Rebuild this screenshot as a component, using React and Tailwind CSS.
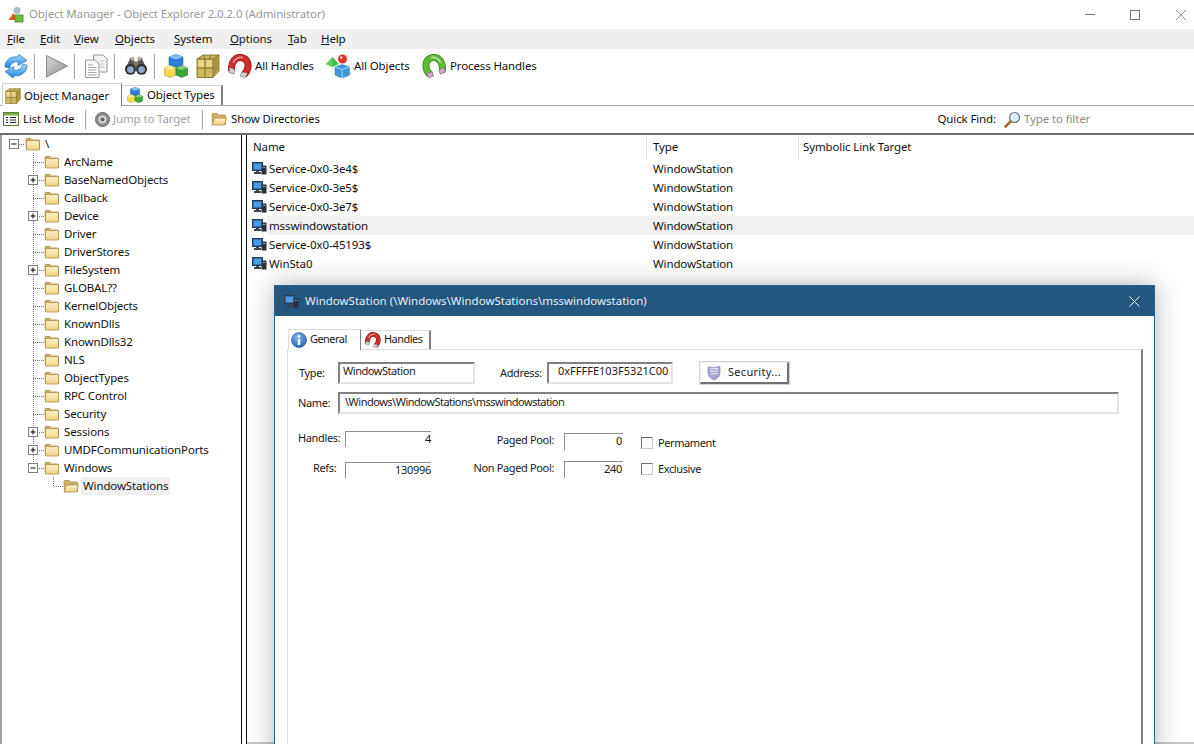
import React from "react";

const treeItems = [
  { name: "ArcName" },
  { name: "BaseNamedObjects", plus: true },
  { name: "Callback" },
  { name: "Device", plus: true },
  { name: "Driver" },
  { name: "DriverStores" },
  { name: "FileSystem", plus: true },
  { name: "GLOBAL??" },
  { name: "KernelObjects" },
  { name: "KnownDlls" },
  { name: "KnownDlls32" },
  { name: "NLS" },
  { name: "ObjectTypes" },
  { name: "RPC Control" },
  { name: "Security" },
  { name: "Sessions", plus: true },
  { name: "UMDFCommunicationPorts", plus: true },
];

const rows = ["Service-0x0-3e4$", "Service-0x0-3e5$", "Service-0x0-3e7$", "msswindowstation", "Service-0x0-45193$", "WinSta0"];

function FolderIcon({ open }) {
  return (
    <svg width="16" height="16" viewBox="0 0 16 16" className="shrink-0">
      <defs>
        <linearGradient id="fld" x1="0" y1="0" x2="0" y2="1">
          <stop offset="0" stopColor="#fcf1cc" />
          <stop offset="1" stopColor="#f0d083" />
        </linearGradient>
      </defs>
      <path d="M1 3.5 Q1 2.5 2 2.5 H6 L7.5 4 H13.5 Q14.5 4 14.5 5 V13.5 H1.5 Z" fill="#d2b261" stroke="#a38a4e" strokeWidth="0.8" />
      {open ? (
        <path d="M3.5 7 H15.5 L13.5 14 H1 Z" fill="url(#fld)" stroke="#a88a48" strokeWidth="0.8" />
      ) : (
        <path d="M1.5 5 Q1.5 4.6 2 4.6 H14 Q14.5 4.6 14.5 5 V13 Q14.5 14 13.5 14 H2.5 Q1.5 14 1.5 13 Z" fill="url(#fld)" stroke="#a88a48" strokeWidth="0.8" />
      )}
    </svg>
  );
}

function ExpandBox({ x, minus }) {
  return (
    <g>
      <rect x={x + 0.5} y="4.5" width="9" height="9" fill="#fff" stroke="#808080" />
      <path d={`M${x + 2.5} 9 H${x + 7.5}`} stroke="#000" strokeWidth="1" />
      {!minus && <path d={`M${x + 5} 6.5 V11.5`} stroke="#000" strokeWidth="1" />}
    </g>
  );
}

// dotted connectors and the +/- box of one tree row
function Gutter({ plus, minus, last }) {
  return (
    <svg width="44" height="18" className="shrink-0">
      <path d={last ? "M33.5 0 V9" : "M33.5 0 V18"} stroke="#777" strokeDasharray="1 1" />
      <path d="M33 9.5 H44" stroke="#777" strokeDasharray="1 1" />
      {(plus || minus) && <ExpandBox x={28} minus={minus} />}
    </svg>
  );
}

function StationIcon({ size = 15 }) {
  return (
    <svg width={size} height={size} viewBox="0 0 15 15" className="shrink-0">
      <rect x="0.5" y="1.5" width="10" height="8" fill="#2b6fb8" stroke="#2d3a4a" />
      <rect x="2" y="3" width="7" height="5" fill="#4f9be0" />
      <path d="M4 9.5 H7 V11 H9 V13 H2 V11 H4 Z" fill="#3c4650" />
      <rect x="9.5" y="4.5" width="5" height="9" fill="#2b3138" />
      <rect x="10.5" y="6" width="3" height="1" fill="#8a939c" />
    </svg>
  );
}

function Refresh() {
  return (
    <svg width="24" height="24" viewBox="0 0 24 24">
      <defs>
        <linearGradient id="rf" x1="0" y1="0" x2="0" y2="1">
          <stop offset="0" stopColor="#a8d9fb" />
          <stop offset="1" stopColor="#1a80e0" />
        </linearGradient>
      </defs>
      <path d="M1 13 C1 6 7 2 13.5 3 L15 0.5 L23 6.5 L14 11.5 L14.5 8 C10 7 6.5 9 5.8 14 Z" fill="url(#rf)" stroke="#1c6fbe" strokeWidth="0.7" />
      <path d="M23 11 C23 18.5 17 22.5 10.5 21.5 L9 24 L1 17.5 L10 12.5 L9.5 16 C14 17 17.6 15 18.2 10.5 Z" fill="url(#rf)" stroke="#1c6fbe" strokeWidth="0.7" />
    </svg>
  );
}

function Play() {
  return (
    <svg width="24" height="24" viewBox="0 0 24 24">
      <defs>
        <linearGradient id="pl" x1="0" y1="0" x2="1" y2="1">
          <stop offset="0" stopColor="#d8d8d8" />
          <stop offset="1" stopColor="#8c8c8c" />
        </linearGradient>
      </defs>
      <path d="M1.5 1.5 L22.5 12 L1.5 23 Z" fill="url(#pl)" stroke="#8a8a8a" />
    </svg>
  );
}

function Copy() {
  return (
    <svg width="24" height="24" viewBox="0 0 24 24">
      <path d="M9.5 1 H19 L23 5 V18 H9.5 Z" fill="#f4f4f4" stroke="#9a9a9a" />
      <path d="M1.5 6 H11 L15 10 V23.5 H1.5 Z" fill="#fafafa" stroke="#9a9a9a" />
      <path d="M4 11 H9 M4 13.5 H12.5 M4 16 H12.5 M4 18.5 H12.5 M4 21 H12.5" stroke="#a8a8a8" />
      <path d="M16 7 H20.5 M16 10 H20.5 M16 13 H20.5" stroke="#c0c0c0" />
    </svg>
  );
}

function Binoculars() {
  return (
    <svg width="24" height="24" viewBox="0 0 26 24">
      <path d="M7 3 H11 V9 H15 V3 H19 L24 14 H2 Z" fill="#555" />
      <rect x="7.5" y="2" width="3.5" height="4" fill="#b9b09c" />
      <rect x="15" y="2" width="3.5" height="4" fill="#b9b09c" />
      <rect x="10.5" y="7" width="5" height="6" fill="#857a68" />
      <circle cx="7" cy="15.5" r="6" fill="#333" />
      <circle cx="19" cy="15.5" r="6" fill="#333" />
      <circle cx="7" cy="16" r="3.6" fill="#8fa9c8" />
      <circle cx="19" cy="16" r="3.6" fill="#8fa9c8" />
    </svg>
  );
}

function Cubes({ size = 24 }) {
  return (
    <svg width={size} height={size} viewBox="0 0 24 24" className="shrink-0">
      <path d="M5 3 L12 0.5 L19 3 V11 L12 14 L5 11 Z" fill="#2c7fd8" stroke="#1f5fa8" strokeWidth="0.6" />
      <path d="M5 3 L12 5.5 L19 3 L12 0.5 Z" fill="#7fc0f5" />
      <path d="M0.5 14 L6 11.5 L12 14 V21 L6 23.5 L0.5 21 Z" fill="#f4d94a" stroke="#a89526" strokeWidth="0.6" />
      <path d="M0.5 14 L6 16 L12 14 L6 11.5 Z" fill="#fbef9a" />
      <path d="M12 14 L17.5 11.5 L23.5 14 V21 L17.5 23.5 L12 21 Z" fill="#3aa53a" stroke="#25752a" strokeWidth="0.6" />
      <path d="M12 14 L17.5 16 L23.5 14 L17.5 11.5 Z" fill="#7fd070" />
    </svg>
  );
}

function GoldBox({ size = 24 }) {
  return (
    <svg width={size} height={size} viewBox="0 0 24 24" className="shrink-0">
      <path d="M1 5 L7 1 H23 V17 L17 23.5 H1 Z" fill="#cdb95f" stroke="#6e5f22" strokeWidth="0.8" />
      <path d="M1 5 H17 L23 1 M17 5 V23.5" stroke="#6e5f22" strokeWidth="0.8" fill="none" />
      <path d="M1 14 H17 L23 9 M9 5 V23.5 M7 1 L9 5 M15 1 L13 5" stroke="#6e5f22" strokeWidth="0.8" fill="none" />
      <path d="M2 6 H8 V13 H2 Z M10 6 H16 V13 H10 Z" fill="#e6d487" />
      <path d="M18 5.5 L22 2.5 V16.5 L18 21 Z" fill="#a8923a" />
    </svg>
  );
}

function Magnet({ size = 24, green }) {
  const main = green ? "#5fbc30" : "#d02c2c";
  const edge = green ? "#3a821b" : "#871818";
  const tip = green ? "#d3a6cc" : "#cfd3d8";
  return (
    <svg width={size} height={size} viewBox="0 0 24 24" className="shrink-0">
      <g transform={green ? "translate(24 0) scale(-1 1) rotate(18 12 12)" : "rotate(18 12 12)"}>
        <path d="M5.5 19 C2 12 4.5 3.5 12 3.5 C19.5 3.5 22 12 18.5 19" fill="none" stroke={edge} strokeWidth="7" />
        <path d="M5.5 19 C2 12 4.5 3.5 12 3.5 C19.5 3.5 22 12 18.5 19" fill="none" stroke={main} strokeWidth="5.4" />
        <path d="M4.5 11 C5 7 8 3.5 12 3" fill="none" stroke="#fff" strokeOpacity="0.6" strokeWidth="1.5" />
        <path d="M2.5 16.5 L8.5 17 L8.5 21.5 L3.5 21.5 Z" fill={tip} stroke="#666" strokeWidth="0.6" />
        <path d="M15.5 17 L21.5 16.5 L20.5 21.5 L15.5 21.5 Z" fill={tip} stroke="#666" strokeWidth="0.6" />
      </g>
    </svg>
  );
}

function AllObjects() {
  return (
    <svg width="24" height="24" viewBox="0 0 24 24">
      <path d="M6.5 3 L13 10 L6.5 13 L0 10 Z" fill="#3fb84a" />
      <path d="M6.5 3 L6.5 13 L0 10 Z" fill="#62d066" />
      <circle cx="16.5" cy="5" r="4.5" fill="#e52e2e" />
      <circle cx="15.2" cy="3.5" r="1.4" fill="#ffb0a8" />
      <path d="M16 10.5 L23.5 13 V21 L16 24 L9 21 V13 Z" fill="#3a9ad9" stroke="#1f6ea8" strokeWidth="0.5" />
      <path d="M9 13 L16 15.5 L23.5 13 M16 15.5 V24" stroke="#bfe3f8" strokeWidth="0.8" fill="none" />
    </svg>
  );
}

function Sep() {
  return <div className="w-px h-[25px] bg-[#a5a5a5] shrink-0" />;
}

function Sep2() {
  return <div className="w-px h-[19px] bg-[#a5a5a5] shrink-0" />;
}

function Menu({ first, rest, className }) {
  return (
    <span className={className}>
      <span className="underline underline-offset-1">{first}</span>
      {rest}
    </span>
  );
}

function Sunken({ className, children }) {
  return (
    <div className={`border-t-2 border-l-2 border-t-[#808080] border-l-[#808080] border-r-2 border-b-2 border-r-[#e3e3e3] border-b-[#e3e3e3] leading-[14px] ${className}`}>
      {children}
    </div>
  );
}

function Check({ label }) {
  return (
    <div className="flex items-center gap-[5px] h-[12px]">
      <div className="w-[12px] h-[12px] border border-t-[#707070] border-l-[#707070] border-r-[#c8c8c8] border-b-[#c8c8c8] bg-white" />
      <span className="tracking-[-0.4px]">{label}</span>
    </div>
  );
}

function StatField({ className, children }) {
  return <div className={`border-t border-l border-[#909090] text-right leading-[13px] tracking-[-0.3px] ${className}`}>{children}</div>;
}

function Dialog() {
  return (
    <div className="absolute left-[274px] top-[285px] w-[881px] h-[480px] bg-white border border-[#2a6592] shadow-[0_0_24px_rgba(0,0,0,0.3)] text-[11px] tracking-[-0.35px] text-[#1a1a1a]">
      <div className="h-[30px] bg-[#22577f] flex items-center pl-[9px] pr-[14px] text-[11.5px] tracking-normal text-[#e6eff6]">
        <StationIcon />
        <span className="ml-[6px] flex-1 pb-[1px]">WindowStation (\Windows\WindowStations\msswindowstation)</span>
        <svg width="11" height="11" viewBox="0 0 11 11">
          <path d="M0.5 0.5 L10.5 10.5 M10.5 0.5 L0.5 10.5" stroke="#fff" strokeWidth="1" />
        </svg>
      </div>
      <div className="ml-[12px] mr-[11px] mt-[12px]">
        <div className="flex items-end h-[21px] pl-[1px] relative z-10">
          <div className="w-[73px] h-[21px] mb-[-1px] pb-[1px] bg-white border-t border-l border-[#dcdcdc] border-r border-r-[#808080] flex items-center pl-[2px] gap-[3px] tracking-[-0.55px]">
            <svg width="16" height="16" viewBox="0 0 16 16">
              <defs>
                <radialGradient id="inf" cx="0.4" cy="0.3" r="0.8">
                  <stop offset="0" stopColor="#7fb8ee" />
                  <stop offset="1" stopColor="#1c5fb4" />
                </radialGradient>
              </defs>
              <circle cx="8" cy="8" r="7.5" fill="url(#inf)" stroke="#1c4f90" strokeWidth="0.6" />
              <circle cx="8" cy="4.5" r="1.5" fill="#fff" />
              <rect x="6.8" y="7" width="2.4" height="6" fill="#fff" />
            </svg>
            <span>General</span>
          </div>
          <div className="w-[70px] h-[19px] pb-[1px] bg-white border-t border-[#dcdcdc] border-r-2 border-r-[#808080] flex items-center pl-[4px] gap-[3px] tracking-[-0.55px]">
            <Magnet size={16} />
            <span>Handles</span>
          </div>
        </div>
        <div className="h-[500px] border-t border-l border-[#dcdcdc] border-r-2 border-r-[#808080] relative">
          <div className="flex items-center h-[22px] mt-[12px]">
            <span className="ml-[11px] w-[39px]">Type:</span>
            <Sunken className="w-[137px] h-[22px] pl-[3px] tracking-[-0.45px]">WindowStation</Sunken>
            <span className="ml-[25px] w-[47px] pt-[1px]">Address:</span>
            <Sunken className="w-[126px] h-[22px] pl-[9px] tracking-normal">0xFFFFE103F5321C00</Sunken>
            <div className="ml-[27px] w-[89px] h-[22px] flex items-center border border-t-[#f0f0f0] border-l-[#f0f0f0] border-r-2 border-b-2 border-r-[#707070] border-b-[#707070] outline outline-[#d5d5d5] pl-[5px]">
              <svg width="16" height="16" viewBox="0 0 16 16">
                <path d="M2 2 Q8 3 14 1.5 V8 Q14 12.5 8 15 Q2 12.5 2 8 Z" fill="#a7a6d8" stroke="#77779f" strokeWidth="0.6" />
                <path d="M4 4 L12 3.5 M4 6.5 L12 6 M4.5 9 L11.5 8.5" stroke="#f0f0fa" />
              </svg>
              <span className="ml-[6px] tracking-[0.3px]">Security...</span>
            </div>
          </div>
          <div className="flex items-center h-[22px] mt-[8px]">
            <span className="ml-[10px] w-[40px]">Name:</span>
            <Sunken className="w-[781px] h-[22px] pl-[5px] pt-[1px] tracking-[-0.5px]">\Windows\WindowStations\msswindowstation</Sunken>
          </div>
          <div className="flex mt-[17px]">
            <div className="ml-[10px] w-[47px] flex flex-col items-start">
              <span className="h-[16px] leading-[14px]">Handles:</span>
              <span className="h-[16px] mt-[15px] ml-[15px] leading-[12px]">Refs:</span>
            </div>
            <div className="w-[86px]">
              <StatField className="h-[16px]">4</StatField>
              <StatField className="h-[16px] mt-[15px]">130996</StatField>
            </div>
            <div className="ml-[44px] w-[89px] flex flex-col items-end pr-[10px]">
              <span className="h-[17px] mt-[2px] leading-[14px]">Paged Pool:</span>
              <span className="h-[17px] mt-[10px] leading-[15px] whitespace-nowrap">Non Paged Pool:</span>
            </div>
            <div className="w-[59px] mt-[2px]">
              <StatField className="h-[17px] pr-[1px]">0</StatField>
              <StatField className="h-[17px] mt-[11px] pr-[1px]">240</StatField>
            </div>
            <div className="ml-[18px] mt-[6px] flex flex-col gap-[14px]">
              <Check label="Permament" />
              <Check label="Exclusive" />
            </div>
          </div>
        </div>
      </div>
    </div>
  );
}

export default function App() {
  return (
    <div className="relative w-[1194px] h-[744px] overflow-hidden bg-white text-[11.5px] tracking-[-0.13px] text-[#111] flex flex-col" style={{ fontFamily: '"Noto Sans", sans-serif' }}>
      {/* title bar */}
      <div className="h-[29px] flex items-center pl-[8px] shrink-0">
        <svg width="17" height="17" viewBox="0 0 17 17">
          <path d="M0.5 14 L5.5 7 L9 14 Z" fill="#e2561c" />
          <circle cx="9" cy="4.5" r="3.5" fill="#a9bccb" />
          <rect x="7" y="9" width="8" height="7" fill="#6cbf3c" stroke="#3f8a22" strokeWidth="0.8" />
        </svg>
        <span className="ml-[4px] pb-[1px] text-[#999]">Object Manager - Object Explorer 2.0.2.0 (Administrator)</span>
        <div className="ml-auto flex items-center">
          <div className="w-[10px] h-px bg-[#777] mr-[35px]" />
          <div className="w-[10px] h-[10px] border border-[#777] mr-[36px]" />
          <svg width="10" height="10" viewBox="0 0 10 10" className="mr-[8px]">
            <path d="M0 0 L10 10 M10 0 L0 10" stroke="#888" strokeWidth="0.9" />
          </svg>
        </div>
      </div>

      {/* menu */}
      <div className="h-[20px] bg-[#efefef] flex items-center shrink-0 leading-[20px]">
        <Menu first="F" rest="ile" className="ml-[7px] w-[33px]" />
        <Menu first="E" rest="dit" className="w-[34px]" />
        <Menu first="V" rest="iew" className="w-[41px]" />
        <Menu first="O" rest="bjects" className="w-[59px]" />
        <Menu first="S" rest="ystem" className="w-[56px]" />
        <Menu first="O" rest="ptions" className="w-[58px]" />
        <Menu first="T" rest="ab" className="w-[33px]" />
        <Menu first="H" rest="elp" />
      </div>

      {/* toolbar */}
      <div className="h-[34px] flex items-center shrink-0 pl-[4px]">
        <Refresh />
        <div className="w-[6px]" />
        <Sep />
        <div className="w-[10px]" />
        <Play />
        <div className="w-[5px]" />
        <Sep />
        <div className="w-[9px]" />
        <Copy />
        <div className="w-[6px]" />
        <Sep />
        <div className="w-[9px]" />
        <Binoculars />
        <div className="w-[6px]" />
        <Sep />
        <div className="w-[9px]" />
        <Cubes />
        <div className="w-[8px]" />
        <GoldBox />
        <div className="w-[8px]" />
        <Magnet />
        <span className="ml-[3px] w-[71px]">All Handles</span>
        <AllObjects />
        <span className="ml-[4px] w-[68px]">All Objects</span>
        <Magnet green />
        <span className="ml-[4px]">Process Handles</span>
      </div>

      {/* tabs */}
      <div className="h-[23px] flex items-end pl-[2px] border-b border-b-[#a8a8a8] shrink-0">
        <div className="w-[120px] h-[23px] mb-[-1px] pt-[2px] bg-white border border-[#d0d0d0] border-b-0 border-r-[#808080] flex items-center pl-[2px] gap-[3px] relative">
          <GoldBox size={16} />
          <span>Object Manager</span>
        </div>
        <div className="w-[101px] h-[20px] pb-[1px] border-t border-t-[#d0d0d0] border-r-2 border-r-[#808080] flex items-center pl-[5px] gap-[4px]">
          <Cubes size={16} />
          <span>Object Types</span>
        </div>
      </div>

      {/* second toolbar */}
      <div className="h-[29px] pb-[1px] flex items-center pl-[3px] shrink-0 border-b-2 border-b-[#6b6b6b]">
        <svg width="16" height="14" viewBox="0 0 16 14">
          <rect x="0.5" y="0.5" width="15" height="13" fill="#fff" stroke="#5c7f3a" />
          <rect x="1" y="1" width="14" height="2.5" fill="#7fae4d" />
          <path d="M3 5.5 H5 M7 5.5 H13 M3 8 H5 M7 8 H13 M3 10.5 H5 M7 10.5 H13" stroke="#222" />
        </svg>
        <span className="ml-[4px] w-[62px]">List Mode</span>
        <Sep2 />
        <svg width="15" height="15" viewBox="0 0 15 15" className="ml-[9px]">
          <circle cx="7.5" cy="7.5" r="7" fill="#8a8a8a" stroke="#666" />
          <circle cx="7.5" cy="7.5" r="4" fill="#d8d8d8" />
          <circle cx="7.5" cy="7.5" r="2" fill="#666" />
        </svg>
        <span className="ml-[3px] w-[89px] text-[#a0a0a0]">Jump to Target</span>
        <Sep2 />
        <div className="ml-[8px]"><FolderIcon open /></div>
        <span className="ml-[4px]">Show Directories</span>
        <span className="ml-auto">Quick Find:</span>
        <svg width="17" height="17" viewBox="0 0 17 17" className="ml-[8px]">
          <path d="M1.5 15.5 L7 10" stroke="#a06a2a" strokeWidth="2.6" strokeLinecap="round" />
          <circle cx="10.5" cy="6.5" r="5" fill="#d9ecf8" stroke="#777" strokeWidth="1.2" />
        </svg>
        <span className="ml-[3px] w-[170px] text-[#8a8a8a]">Type to filter</span>
      </div>

      {/* main panes */}
      <div className="flex-1 flex min-h-0">
        <div className="w-[242px] shrink-0 border-l-2 border-l-[#a0a0a0] border-r border-r-[#111]">
          <div className="flex items-center h-[18px]">
            <svg width="23" height="18" className="shrink-0">
              <path d="M17 9.5 H23" stroke="#777" strokeDasharray="1 1" />
              <ExpandBox x={7} minus />
            </svg>
            <FolderIcon />
            <span className="ml-[4px]">\</span>
          </div>
          {treeItems.map((it) => (
            <div key={it.name} className="flex items-center h-[18px]">
              <div className="-ml-[2px] flex shrink-0">
                <Gutter plus={it.plus} />
              </div>
              <FolderIcon />
              <span className="ml-[4px]">{it.name}</span>
            </div>
          ))}
          <div className="flex items-center h-[18px]">
            <div className="-ml-[2px] flex shrink-0">
              <Gutter minus last />
            </div>
            <FolderIcon />
            <span className="ml-[4px]">Windows</span>
          </div>
          <div className="flex items-center h-[18px] pl-[49px]">
            <svg width="12" height="18" className="shrink-0">
              <path d="M2.5 0 V9.5 H12" stroke="#777" strokeDasharray="1 1" fill="none" />
            </svg>
            <FolderIcon open />
            <span className="ml-[2px] px-[2px] h-[18px] leading-[18px] bg-[#efefef]">WindowStations</span>
          </div>
        </div>
        <div className="w-[4px] shrink-0" />
        <div className="flex-1 border-l border-l-[#111] min-w-0 flex flex-col">
          <div className="h-[24px] flex items-center shrink-0">
            <span className="pl-[6px] w-[400px] h-[23px] leading-[21px] border-r border-r-[#dedede]">Name</span>
            <span className="pl-[6px] w-[152px] h-[23px] leading-[21px] border-r border-r-[#dedede]">Type</span>
            <span className="pl-[4px] h-[23px] leading-[21px]">Symbolic Link Target</span>
          </div>
          {rows.map((r) => (
            <div key={r} className="flex items-center h-[19px] shrink-0">
              <div className="ml-[5px]"><StationIcon /></div>
              <div className={`flex-1 flex items-center h-[19px] pl-[2px] ${r === "msswindowstation" ? "bg-[#f0f0f0]" : ""}`}>
                <span className="w-[384px]">{r}</span>
                <span>WindowStation</span>
              </div>
            </div>
          ))}
          <div className="flex-1" />
          <div className="h-[2px] bg-[#c8c8c8] shrink-0" />
        </div>
      </div>

      <Dialog />
    </div>
  );
}
